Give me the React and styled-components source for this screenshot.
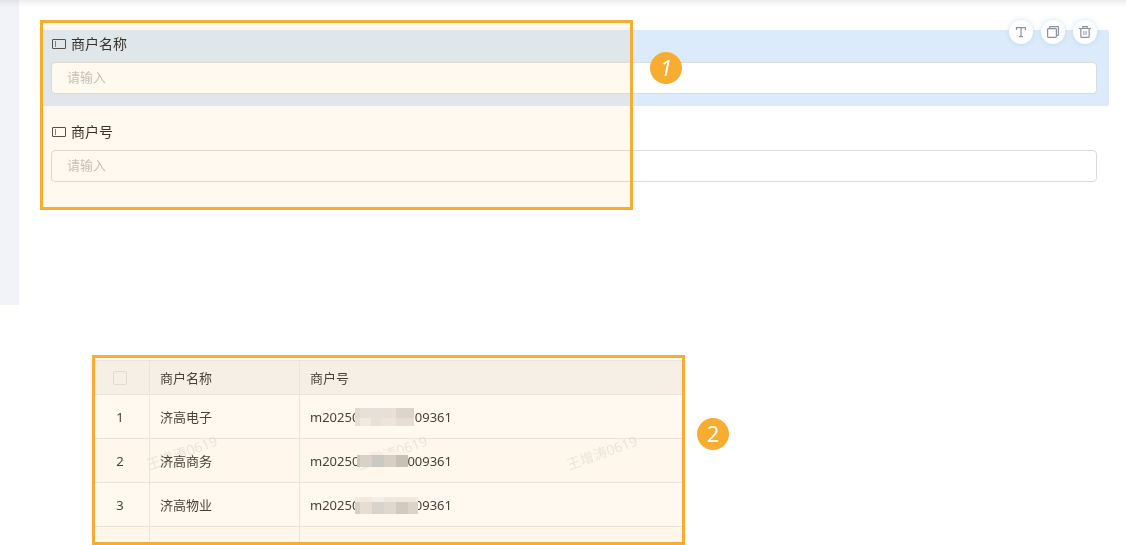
import React from "react";
import styled, { createGlobalStyle } from "styled-components";

const GlobalStyle = createGlobalStyle`
  *, *::before, *::after { box-sizing: border-box; }
  body {
    margin: 0;
    background: #fff;
    color: #333;
    font-family: "Noto Sans", "Noto Sans CJK SC", sans-serif;
    font-size: 13px;
    overflow-x: hidden;
  }
`;

const accent = "#f9ad30";
const tint = "rgba(255, 200, 95, 0.1)";

const Page = styled.div`
  position: relative;
`;

const TopShadow = styled.div`
  position: absolute;
  inset: 0 0 auto 0;
  height: 8px;
  background: linear-gradient(#ececec, #f6f6f6 40%, #fff);
  mix-blend-mode: multiply;
  pointer-events: none;
`;

const Editor = styled.section`
  display: flex;
  min-height: 305px;
`;

const SideStrip = styled.aside`
  flex: 0 0 19px;
  background: #f2f3f8;
`;

const Canvas = styled.form`
  position: relative;
  flex: 1;
  display: flex;
  flex-direction: column;
  gap: 12px;
  padding: 30px 17px 0 21px;
`;

const Field = styled.div`
  position: relative;
  padding: 0 12px 12px 11px;
  border-radius: 2px;
  background: ${(p) => (p.$selected ? "#dcebfb" : "transparent")};
`;

const FieldLabel = styled.label`
  display: flex;
  align-items: center;
  gap: 5px;
  height: 28px;
  margin-bottom: 4px;
  padding-left: 1px;
  font-size: 14px;
  line-height: 20px;
  color: #222;
`;

const TextBox = styled.input`
  display: block;
  width: 100%;
  height: 32px;
  padding: 0 15px 2px;
  border: 1px solid #d9dbdf;
  border-radius: 4px;
  background: #fff;
  color: #333;
  font: inherit;
  line-height: 20px;
  &::placeholder { color: #bfbfc1; opacity: 1; }
`;

const Tools = styled.div`
  position: absolute;
  top: -10px;
  right: 12px;
  display: flex;
  gap: 8px;
`;

const ToolButton = styled.button`
  display: grid;
  place-items: center;
  width: 24px;
  height: 24px;
  padding: 0;
  border: 0;
  border-radius: 50%;
  background: #fff;
  color: #8a919f;
  box-shadow: 0 0 5px rgba(100, 170, 210, 0.3);
`;

const Marker = styled.div`
  position: absolute;
  top: 20px;
  left: 21px;
  width: 593px;
  height: 190px;
  border: 3px solid ${accent};
  background: ${tint};
  pointer-events: none;
`;

const Badge = styled.span`
  display: grid;
  place-items: center;
  flex: none;
  width: 32px;
  height: 32px;
  border-radius: 50%;
  background: ${accent};
  color: #fff;
  font-size: 22px;
  line-height: 30px;
  font-style: ${(p) => (p.$slanted ? "italic" : "normal")};
  padding-bottom: 2px;
`;

const FloatingBadge = styled(Badge)`
  position: absolute;
  top: 52px;
  left: 631px;
`;

const Records = styled.section`
  display: flex;
  align-items: flex-start;
  gap: 12px;
  padding: 50px 0 0 92px;
`;

const BadgeSlot = styled.div`
  padding-top: 63px;
`;

const Frame = styled.div`
  position: relative;
  width: 593px;
  padding: 5px 3px 3px;
  overflow: hidden;
  &::after {
    content: "";
    position: absolute;
    inset: 0;
    border: 3px solid ${accent};
    background: ${tint};
    pointer-events: none;
  }
`;

const Table = styled.table`
  width: 100%;
  table-layout: fixed;
  border-collapse: separate;
  border-spacing: 0;
`;

const HeadCell = styled.th`
  height: 35px;
  padding: ${(p) => (p.$center ? "0 14px 0 10px" : "0 10px")};
  border: solid #e8e8e9;
  border-width: 1px 1px 1px 0;
  background: #f4f4f4;
  font-weight: 400;
  line-height: 20px;
  text-align: ${(p) => (p.$center ? "center" : "left")};
  &:last-child { border-right: 0; }
`;

const Row = styled.tr`
  background: ${(p) => (p.$shaded ? "#fffcfc" : "#fff")};
`;

const Cell = styled.td`
  height: ${(p) => (p.$cut ? "15px" : "44px")};
  padding: ${(p) => (p.$center ? "0 14px 0 10px" : "0 10px")};
  border: solid #e8e8e9;
  border-width: ${(p) => (p.$cut ? "0 1px 0 0" : "0 1px 1px 0")};
  line-height: 20px;
  text-align: ${(p) => (p.$center ? "center" : "left")};
  &:last-child { border-right: 0; }
`;

const Tick = styled.input`
  appearance: none;
  display: block;
  width: 14px;
  height: 14px;
  margin: 0 auto;
  border: 1px solid #dcdedd;
  border-radius: 2px;
`;

const Code = styled.span`
  position: relative;
  display: flex;
  justify-content: space-between;
  width: 142px;
`;

const Mosaic = styled.svg`
  position: absolute;
  z-index: 1;
  top: 1px;
  left: ${(p) => p.$left}px;
`;

const Watermark = styled.span`
  position: absolute;
  top: 88px;
  left: ${(p) => p.$left}px;
  width: 80px;
  text-align: center;
  font-size: 14px;
  line-height: 20px;
  color: rgba(0, 0, 0, 0.09);
  transform: rotate(-20deg);
  pointer-events: none;
`;

const InputIcon = () => (
  <svg width="14" height="10" viewBox="0 0 14 10" fill="none" aria-hidden="true">
    <rect x=".5" y=".5" width="13" height="9" rx=".3" stroke="#444" />
    <path d="M3.5 2v6" stroke="#777" />
  </svg>
);

const TextIcon = () => (
  <svg width="12" height="12" viewBox="0 0 12 12" fill="none" stroke="currentColor" aria-hidden="true">
    <path d="M1.5 4V1.7h9V4M6 1.7v9M4 10.6h4" strokeWidth="1.2" />
  </svg>
);

const CopyIcon = () => (
  <svg width="12" height="12" viewBox="0 0 12 12" fill="none" stroke="currentColor" aria-hidden="true">
    <rect x=".6" y="2.6" width="8.8" height="8.8" rx=".8" strokeWidth="1.2" />
    <path d="M2.6 2.4V1.2q0-.6.6-.6h7.6q.6 0 .6.6v7.6q0 .6-.6.6H9.6" strokeWidth="1.2" />
  </svg>
);

const TrashIcon = () => (
  <svg width="12" height="12" viewBox="0 0 12 12" fill="none" stroke="currentColor" aria-hidden="true">
    <path d="M0 2.5h12M3.8 2.3V.6h4.4v1.7M1.8 2.8v7.8q0 .8.8.8h6.8q.8 0 .8-.8V2.8" strokeWidth="1.2" />
    <path d="M4.9 5v4M7.1 5v4" />
  </svg>
);

const rows = [
  {
    name: "济高电子", head: "m20250", tail: "09361", left: 45,
    tiles: [
      [0, 0, 5, 10, "#e2dbd2"], [5, 0, 11, 10, "#e8dfd7"], [16, 0, 11, 10, "#e4e1d9"], [27, 0, 14, 10, "#e7e0d8"], [41, 0, 18, 10, "#ddd4ca"],
      [0, 10, 5, 8, "#e8dfd5"], [5, 10, 11, 8, "#f4e9de"], [16, 10, 11, 8, "#e9e1d8"], [27, 10, 14, 8, "#efe4d9"], [41, 10, 18, 8, "#e8ddd2"],
    ],
  },
  {
    name: "济高商务", head: "m20250", tail: "009361", left: 47,
    tiles: [
      [0, 0, 13, 3, "#fff5ea"], [13, 0, 13, 3, "#f8eee4"], [26, 0, 25, 3, "#fcf2e8"],
      [0, 3, 3, 12, "#cbc5bd"], [3, 3, 12, 12, "#d9d0c7"], [15, 3, 12, 12, "#cac9c4"], [27, 3, 12, 12, "#d8cec5"], [39, 3, 12, 12, "#c9c0b5"],
    ],
  },
  {
    name: "济高物业", head: "m20250", tail: "09361", left: 45,
    tiles: [
      [0, 1, 17, 5, "#f3e9df"], [17, 1, 12, 5, "#f3efe4"], [29, 1, 34, 5, "#f1e7dd"],
      [0, 6, 5, 12, "#d5d0c8"], [5, 6, 12, 12, "#e7ded2"], [17, 6, 12, 12, "#d7d4cd"], [29, 6, 12, 12, "#e0d7ce"], [41, 6, 12, 12, "#d2c9bf"], [53, 6, 10, 12, "#dbd4ca"],
    ],
  },
];

export default function App() {
  return (
    <Page>
      <GlobalStyle />
      <Editor>
        <SideStrip />
        <Canvas>
          <Field $selected>
            <FieldLabel htmlFor="merchant-name"><InputIcon />商户名称</FieldLabel>
            <TextBox id="merchant-name" placeholder="请输入" />
            <Tools>
              <ToolButton type="button" aria-label="文本"><TextIcon /></ToolButton>
              <ToolButton type="button" aria-label="复制"><CopyIcon /></ToolButton>
              <ToolButton type="button" aria-label="删除"><TrashIcon /></ToolButton>
            </Tools>
          </Field>
          <Field>
            <FieldLabel htmlFor="merchant-no"><InputIcon />商户号</FieldLabel>
            <TextBox id="merchant-no" placeholder="请输入" />
          </Field>
          <Marker />
          <FloatingBadge $slanted>1</FloatingBadge>
        </Canvas>
      </Editor>
      <Records>
        <Frame>
          <Table>
            <colgroup>
              <col style={{ width: 55 }} />
              <col style={{ width: 150 }} />
              <col />
            </colgroup>
            <thead>
              <tr>
                <HeadCell $center><Tick type="checkbox" aria-label="全选" /></HeadCell>
                <HeadCell>商户名称</HeadCell>
                <HeadCell>商户号</HeadCell>
              </tr>
            </thead>
            <tbody>
              {rows.map((row, i) => (
                <Row key={row.name} $shaded={i % 2 === 1}>
                  <Cell $center>{i + 1}</Cell>
                  <Cell>{row.name}</Cell>
                  <Cell>
                    <Code>
                      <span>{row.head}</span>
                      <span>{row.tail}</span>
                      <Mosaic $left={row.left} width="64" height="20" aria-hidden="true">
                        {row.tiles.map(([x, y, w, h, fill]) => (
                          <rect key={`${x}-${y}`} x={x} y={y} width={w} height={h} fill={fill} />
                        ))}
                      </Mosaic>
                    </Code>
                  </Cell>
                </Row>
              ))}
              <Row $shaded>
                <Cell $cut />
                <Cell $cut />
                <Cell $cut />
              </Row>
            </tbody>
          </Table>
          <Watermark $left={50}>王增涛0619</Watermark>
          <Watermark $left={260}>王增涛0619</Watermark>
          <Watermark $left={470}>王增涛0619</Watermark>
        </Frame>
        <BadgeSlot><Badge>2</Badge></BadgeSlot>
      </Records>
      <TopShadow />
    </Page>
  );
}
